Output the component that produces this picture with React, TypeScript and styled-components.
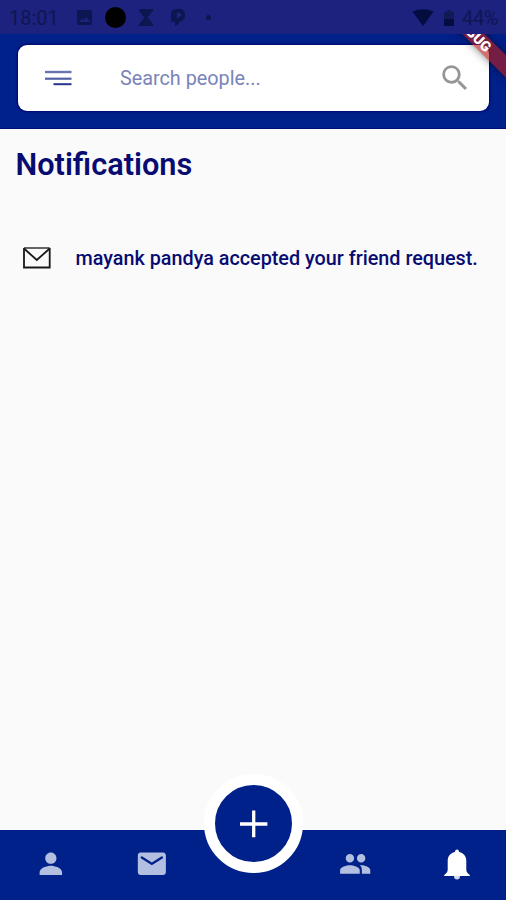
import React from 'react';
import styled, { createGlobalStyle } from 'styled-components';

const GlobalStyle = createGlobalStyle`
  * { box-sizing: border-box; }
  body { margin: 0; background: #fafafa; font-family: Roboto, 'Liberation Sans', sans-serif; }
  svg { display: block; flex: none; }
`;

const Screen = styled.div`
  position: relative;
  width: 506px;
  height: 900px;
  display: flex;
  flex-direction: column;
  overflow: hidden;
  background: #fafafa;
`;

const StatusBar = styled.div`
  position: relative;
  z-index: 2;
  height: 34px;
  flex: none;
  display: flex;
  align-items: center;
  padding: 2px 8px 0 9px;
  background: #1c227d;
  color: #101653;
  font-size: 20px;
`;

const Clock = styled.span`
  width: 67px;
`;

const StatusIcons = styled.div`
  flex: 1;
  display: flex;
  align-items: center;
`;

const Battery = styled.span`
  margin-left: 6px;
  letter-spacing: -0.4px;
`;

const Header = styled.header`
  height: 95px;
  flex: none;
  padding: 11px 17px 0 18px;
  background: #00208a;
  border-bottom: 1px solid #000e74;
`;

const SearchCard = styled.div`
  height: 66px;
  display: flex;
  align-items: center;
  padding: 0 17px 0 26.5px;
  border-radius: 9px;
  background: #fff;
  box-shadow: 0 0 2px 1px #00086c;
`;

const Placeholder = styled.span`
  flex: 1;
  margin-left: 48.5px;
  padding-top: 2px;
  color: #7984b8;
  font-size: 19.8px;
  line-height: 24px;
`;

const Ribbon = styled.div`
  position: absolute;
  z-index: 1;
  left: 450px;
  top: 39px;
  width: 112px;
  height: 16.4px;
  transform-origin: 56px -39px;
  transform: rotate(45deg);
  background: rgba(183, 28, 28, 0.63);
  box-shadow: 0 0 8px rgba(0, 0, 0, 0.5);
  color: #fff;
  font-size: 14.3px;
  font-weight: 900;
  line-height: 16.4px;
  text-align: center;
`;

const Content = styled.main`
  flex: 1;
  padding: 16px 15.5px 0;
  color: #080c72;
`;

const Title = styled.h1`
  margin: 0;
  font-size: 30.7px;
  line-height: 39px;
  font-weight: 600;
`;

const Notification = styled.div`
  display: flex;
  align-items: center;
  height: 40px;
  margin-top: 54px;
  padding-left: 7.5px;
`;

const Message = styled.span`
  margin-left: 24.5px;
  font-size: 19.8px;
  font-weight: 500;
  white-space: nowrap;
`;

const NavBar = styled.nav`
  position: relative;
  height: 70px;
  flex: none;
  display: grid;
  grid-template-columns: repeat(5, 1fr);
  justify-items: center;
  padding: 17px 0 0 0.5px;
  background: #00208a;
`;

const AddButton = styled.button`
  position: absolute;
  left: 204px;
  top: -56px;
  width: 99px;
  height: 99px;
  display: flex;
  align-items: center;
  justify-content: center;
  padding: 0;
  border: 11px solid #fff;
  border-radius: 50%;
  background: #00208a;
`;

const NavItem = styled.div<{ $column: number; $active?: boolean }>`
  grid-column: ${(p) => p.$column};
  padding-left: ${(p) => (p.$active ? '3px' : '0')};
  color: ${(p) => (p.$active ? '#fff' : '#b3bfe0')};
`;

const Glyph = ({ d, size = 33.7 }: { d: string; size?: number }) => (
  <svg width={size} height={size} viewBox="0 0 24 24" fill="currentColor">
    <path d={d} />
  </svg>
);

export default function App() {
  return (
    <>
      <GlobalStyle />
      <Screen>
        <StatusBar>
          <Clock>18:01</Clock>
          <StatusIcons>
            <svg width="140" height="24" viewBox="0 0 140 24" fill="#0b1750">
              <path fillRule="evenodd" d="M3 4H14Q16 4 16 6V17Q16 19 14 19H3Q1 19 1 17V6Q1 4 3 4ZM3.5 16H14L10.5 11L8 14L6 12Z" />
              <circle cx="39.500" cy="11.500" r="10.500" fill="#000" />
              <path d="M63 3H77V5L71.500 11.500L77 18V20H63V18L68.500 11.500L63 5Z" />
              <path fillRule="evenodd" d="M97 4Q109 0 109 9Q109 15 103 16V18L99 20V16H95V6ZM101 6.500V12H103V10.500Q106 10.500 105.500 8Q104.500 6 101 6.500Z" />
              <circle cx="132.500" cy="11.500" r="2.500" />
            </svg>
          </StatusIcons>
          <svg width="44" height="22" viewBox="0 0 44 22" fill="#050d40">
            <path d="M.5 4.500Q11 0 21.500 4.500L11 19Z" />
            <path d="M32 5H35V3H39V5H42V12H32Z" fill="#111957" />
            <path d="M32 12H42V19H32Z" />
          </svg>
          <Battery>44%</Battery>
        </StatusBar>
        <Header>
          <SearchCard>
            <svg width="27" height="16" viewBox="0 0 27 16">
              <path d="M0 2H26.500" stroke="#6774ae" strokeWidth="2.400" />
              <path d="M0 8.700H26.500" stroke="#5361a2" strokeWidth="2.200" />
              <path d="M8.500 14.200H26.500" stroke="#26358b" strokeWidth="2" />
            </svg>
            <Placeholder>Search people...</Placeholder>
            <svg width="34" height="34" viewBox="0 0 24 24" fill="#969696">
              <path d="M15.500 14h-.79l-.28-.27A6.471 6.471 0 0 0 16 9.500 6.500 6.500 0 1 0 9.500 16c1.610 0 3.090-.59 4.230-1.570l.27.28v.79l5 4.990L20.490 19l-4.990-5zm-6 0C7.010 14 5 11.990 5 9.500S7.010 5 9.500 5 14 7.010 14 9.500 11.990 14 9.500 14z" />
            </svg>
          </SearchCard>
        </Header>
        <Ribbon>DEBUG</Ribbon>
        <Content>
          <Title>Notifications</Title>
          <Notification>
            <svg width="28" height="22" viewBox="0 0 28 22" fill="none" stroke="#181818" strokeWidth="1.800">
              <path d="M1 1V20.500H26.700V1" />
              <path d="M1 1H26.700" stroke="#555" />
              <path d="M1 1.500L13.800 13L26.700 1.500" />
            </svg>
            <Message>mayank pandya accepted your friend request.</Message>
          </Notification>
        </Content>
        <NavBar>
          <NavItem $column={1}>
            <Glyph d="M12 12c2.210 0 4-1.790 4-4s-1.790-4-4-4-4 1.790-4 4 1.790 4 4 4zm0 1.400c-2.670 0-8 1.540-8 4.600v2h16v-2c0-3.060-5.330-4.600-8-4.600z" />
          </NavItem>
          <NavItem $column={2}>
            <Glyph d="M20 4H4c-1.100 0-1.990.9-1.990 2L2 18c0 1.100.9 2 2 2h16c1.100 0 2-.9 2-2V6c0-1.100-.9-2-2-2zm-.4 4.250l-7.070 4.420c-.32.2-.74.2-1.060 0L4.400 8.250a.85.85 0 1 1 .9-1.440L12 11l6.700-4.190a.85.85 0 1 1 .9 1.440z" />
          </NavItem>
          <NavItem $column={4}>
            <Glyph d="M16.500 11c1.660 0 2.990-1.340 2.990-3S18.160 5 16.500 5c-1.660 0-3 1.340-3 3s1.340 3 3 3zm-8 0c1.660 0 2.990-1.340 2.990-3S10.160 5 8.500 5c-1.660 0-3 1.340-3 3s1.340 3 3 3zm0 2c-2.330 0-7 1.170-7 3.500V19h14v-2.500c0-2.330-4.670-3.500-7-3.500zm8 0c-.29 0-.62.020-.97.050 1.160.84 1.470 1.970 1.470 3.450V19h6v-2.500c0-2.330-4.170-3.500-6.500-3.500z" />
          </NavItem>
          <NavItem $column={5} $active>
            <svg width="26" height="34" viewBox="0 0 26 34" fill="currentColor">
              <path d="M13 2.500C14.200 2.500 15 3.500 15.200 5C20 6.200 22.300 9.500 22.300 14V22.500C22.300 25 23.500 26.300 25.800 28V29H.2V28C2.500 26.300 3.700 25 3.700 22.500V14C3.700 9.500 6 6.200 10.800 5C11 3.500 11.800 2.500 13 2.500Z" />
              <path d="M10 29H16Q16 32.500 13 32.500Q10 32.500 10 29Z" fill="#d3daf0" />
            </svg>
          </NavItem>
          <AddButton aria-label="Add">
            <svg width="28" height="28" viewBox="0 0 28 28" fill="none" stroke="#fff" strokeWidth="3.300">
              <path d="M13.700 .6V27.200M0 14H27.400" />
            </svg>
          </AddButton>
        </NavBar>
      </Screen>
    </>
  );
}
